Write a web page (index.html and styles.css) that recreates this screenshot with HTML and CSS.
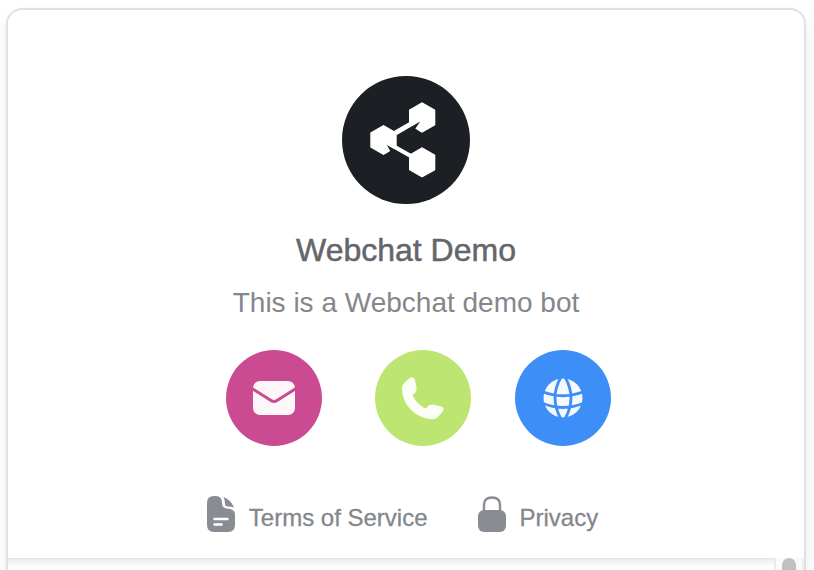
FILE: index.html
```html
<!DOCTYPE html>
<html lang="en">
<head>
<meta charset="utf-8">
<title>Webchat Demo</title>
<link rel="stylesheet" href="styles.css">
</head>
<body>
<main class="card">
  <header class="intro">
    <svg class="avatar" viewBox="0 0 128 128" aria-hidden="true">
      <circle cx="64" cy="64" r="64" fill="#1c1f24"/>
      <g fill="#fff" stroke="#fff" stroke-width="2" stroke-linejoin="round">
        <path d="M41.500 50 L53.700 57 V71 L41.500 78 L29.300 71 V57Z"/>
        <path d="M80 27.300 L92.300 34.300 V48.700 L80 55.700 L68 48.700 V34.300Z"/>
        <path d="M80 72.300 L92.300 79.300 V93.500 L80 100.300 L68 93.500 V79.300Z"/>
      </g>
      <path d="M78.300 45.300 L73.300 52.700 L76.700 55.300 L72 58 H65 V53Z M44.700 68.700 L57 75.700 V80 H44 L45.300 77.500 L48.300 75Z" fill="#1c1f24"/>
      <path d="M52.300 54.700 L68 45.700 L78.300 45.300 L54.500 59.300Z M44.700 68.700 L53 68.700 L69 77.700 V82.600Z" fill="#fff"/>
    </svg>
    <h1 class="title">Webchat Demo</h1>
    <p class="description">This is a Webchat demo bot</p>
    <nav class="contacts">
      <a class="contact email" href="#" aria-label="Email">
        <svg viewBox="0 0 96 96" aria-hidden="true">
          <rect x="27" y="31" width="42" height="34" rx="7"/>
          <path d="M26 38.500 L45 50.500 Q48 52.500 51 50.500 L70 38.500" fill="none" stroke="#cb4b92" stroke-width="3"/>
        </svg>
      </a>
      <a class="contact phone" href="#" aria-label="Phone">
        <svg viewBox="0 0 96 96" aria-hidden="true">
          <path d="M30 32 L35 28 Q38 26 40 30 L41.500 38 Q42 41 40 43 L37.500 45 C40 51 45 56 51 58.500 L53 56 Q55 54 58 54.500 L66 56.500 Q70 58 68 61 L63 67 Q60 70 55 69 C39 67 27 54 27 38 Q27 35 30 32Z"/>
        </svg>
      </a>
      <a class="contact website" href="#" aria-label="Website">
        <svg viewBox="0 0 96 96" aria-hidden="true">
          <circle cx="48" cy="48" r="19.500"/>
          <path d="M46 27 Q34 48 46 69 M50 27 Q62 48 50 69 M27 41.500 Q48 50 69 41.500 M27 53 Q48 62 69 53" fill="none" stroke="#3e8ef7" stroke-width="2.800"/>
        </svg>
      </a>
    </nav>
    <nav class="legal">
      <a class="legal-link" href="#">
        <svg class="legal-icon" viewBox="0 0 28 36" aria-hidden="true">
          <path d="M7 0 H9 Q15 0 15 7 Q15 12 20 12.500 Q28 13 28 18 V29 Q28 36 21 36 H7 Q0 36 0 29 V7 Q0 0 7 0Z" fill="#8a8c93"/>
          <path d="M16.500 1 Q24 4 27 11.500 Q24 10.500 21 10.500 Q18 10.500 18 8 Q18 4 16.500 1Z" fill="#8a8c93"/>
          <path d="M7.500 23 H20.500 M7.500 28.500 H14.500" stroke="#fff" stroke-width="2.400" stroke-linecap="round"/>
        </svg>
        <span>Terms of Service</span>
      </a>
      <a class="legal-link" href="#">
        <svg class="legal-icon" viewBox="0 0 28 36" aria-hidden="true">
          <path d="M6 16 V9 Q6 1.500 14 1.500 Q22 1.500 22 9 V16" fill="none" stroke="#8a8c93" stroke-width="2.400"/>
          <rect y="14" width="28" height="22" rx="6" fill="#8a8c93"/>
        </svg>
        <span>Privacy</span>
      </a>
    </nav>
  </header>
  <section class="messages" aria-label="Messages">
    <div class="thread"></div>
    <div class="track"><div class="thumb"></div></div>
  </section>
</main>
</body>
</html>
```
FILE: styles.css
```css
* {
  box-sizing: border-box;
}

body {
  display: flex;
  height: 100vh;
  margin: 0;
  padding: 8px 8px 0 6px;
  overflow: hidden;
  background: #fff;
  color: #84878b;
  font-family: "Liberation Sans", Arial, sans-serif;
}

.card {
  display: flex;
  flex: 1;
  flex-direction: column;
  overflow: hidden;
  border: 2px solid #e1e1e5;
  border-bottom: 0;
  border-radius: 16px 16px 0 0;
  background: #fff;
  box-shadow: 0 8px 16px rgba(0, 0, 0, 0.08);
}

.intro {
  display: flex;
  flex-shrink: 0;
  flex-direction: column;
  align-items: center;
  padding: 66px 0 24px;
}

.avatar {
  width: 128px;
  height: 128px;
}

.title,
.description {
  margin: 0;
  line-height: 40px;
}

.title {
  margin-top: 26px;
  color: #63666b;
  font-size: 32px;
  font-weight: 400;
  -webkit-text-stroke: 0.5px #63666b;
}

.description {
  margin-top: 13px;
  font-size: 28px;
}

.contacts {
  display: grid;
  grid-template-columns: 105px 96px 96px;
  gap: 44px;
  margin-top: 27px;
  padding-left: 25px;
}

.contact {
  width: 96px;
  height: 96px;
  border-radius: 50%;
}

.contact svg {
  display: block;
  fill: #fff;
  fill-opacity: 0.95;
}

.email {
  background: #cb4b92;
}

.phone {
  background: #bde572;
}

.website {
  background: #3e8ef7;
}

.legal {
  display: flex;
  gap: 50px;
  margin-top: 50px;
  padding-right: 7px;
}

.legal-link {
  display: flex;
  align-items: flex-end;
  gap: 14px;
  height: 38px;
  color: #84878b;
  font-size: 24px;
  line-height: 32px;
  text-decoration: none;
  -webkit-text-stroke: 0.3px #84878b;
}

.legal-icon {
  align-self: flex-start;
  width: 28px;
  height: 36px;
}

.messages {
  display: flex;
  flex: 1;
  min-height: 0;
}

.thread {
  flex: 1;
  background: linear-gradient(#e4e4e4, #f2f2f2 3px, #fff 10px);
}

.track {
  width: 30px;
  padding: 0 6px;
  border-right: 2px solid #f0f0f0;
  border-left: 2px solid #ebebeb;
  background: #fafafa;
}

.thumb {
  height: 120px;
  border-radius: 8px;
  background: #c1c1c1;
}
```
